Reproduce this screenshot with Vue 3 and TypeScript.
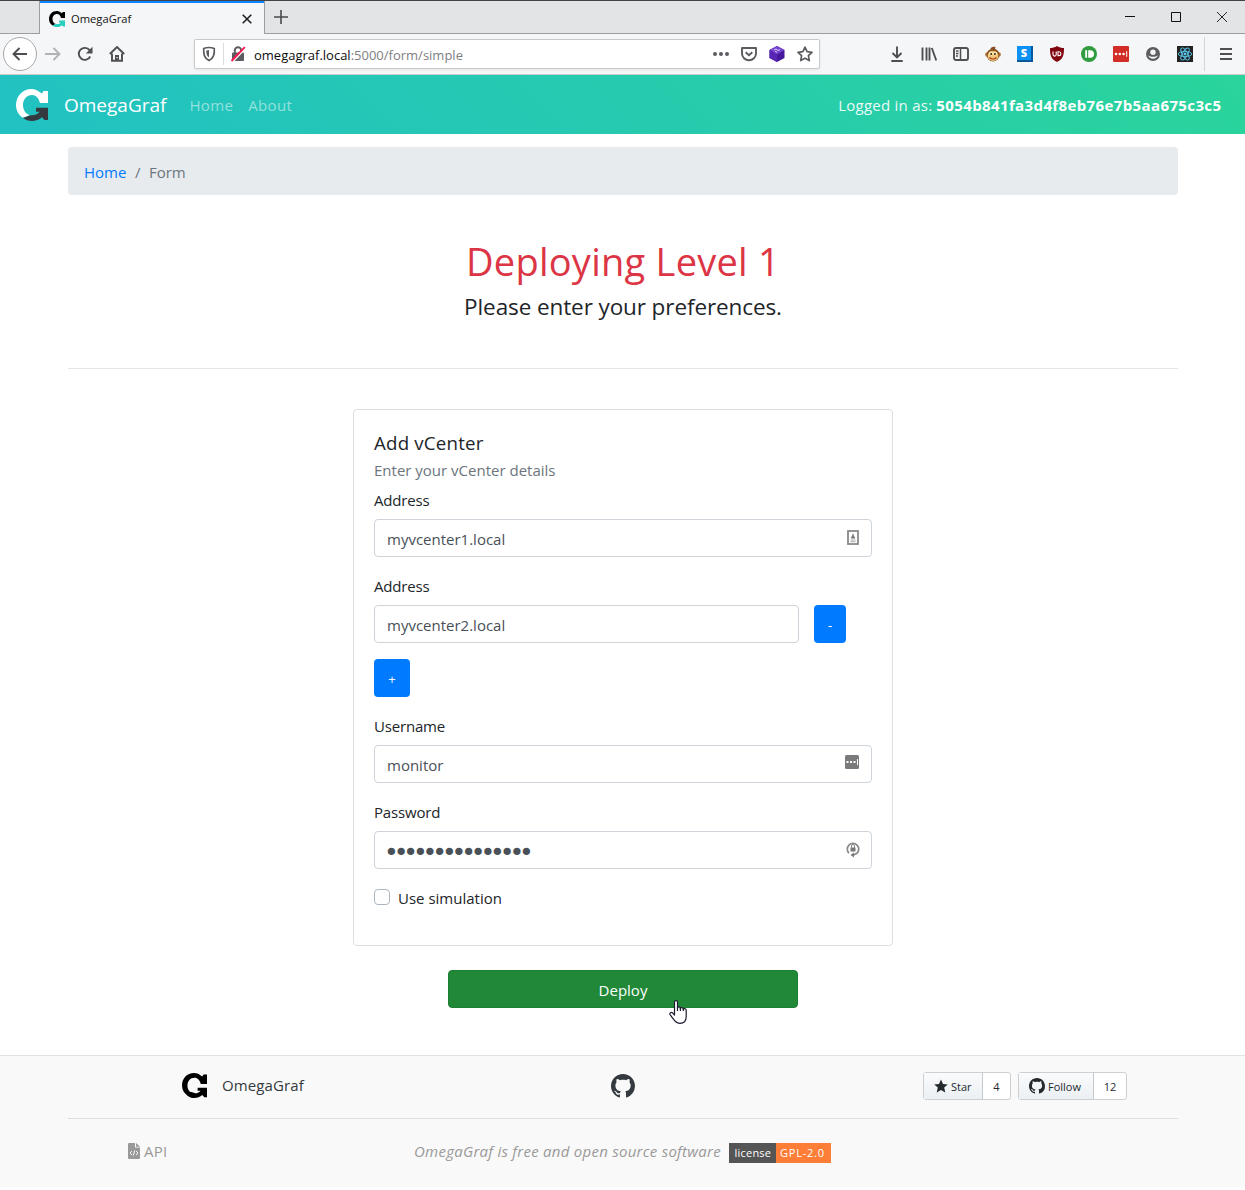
<script setup lang="ts">
import { ref } from 'vue'

const addressOne = ref('myvcenter1.local')
const addressTwo = ref('myvcenter2.local')
const username = ref('monitor')
const password = ref('123456789012345')
const simulation = ref(false)
const octocat =
  'M8 0C3.58 0 0 3.58 0 8c0 3.54 2.29 6.53 5.47 7.59.4.07.55-.17.55-.38 0-.19-.01-.82-.01-1.49-2.01.37-2.53-.49-2.69-.94-.09-.23-.48-.94-.82-1.13-.28-.15-.68-.52-.01-.53.63-.01 1.08.58 1.23.82.72 1.21 1.87.87 2.33.66.07-.52.28-.87.51-1.07-1.78-.2-3.64-.89-3.64-3.95 0-.87.31-1.59.82-2.15-.08-.2-.36-1.02.08-2.12 0 0 .67-.21 2.2.82.64-.18 1.32-.27 2-.27s1.36.09 2 .27c1.53-1.04 2.2-.82 2.2-.82.44 1.1.16 1.92.08 2.12.51.56.82 1.27.82 2.15 0 3.07-1.87 3.75-3.65 3.95.29.25.54.73.54 1.48 0 1.07-.01 1.93-.01 2.2 0 .21.15.46.55.38A8.01 8.01 0 0 0 16 8c0-4.42-3.58-8-8-8z'
const logoRing =
  'M23.500 3L26 4.500L27.500 2H32V14H24C22.800 9 20 6 16 6C10.500 6 7 10.500 7 16C7 21 9.500 25 14 26.200L7 28.800C2.600 26 0 21.500 0 16C0 7 6.500 0 15.500 0C18.500 0 21.300 1 23.500 3Z'
const logoArrow =
  'M7 28.800C10 28.500 12 26.200 16 26.200C19.500 26.200 22 25 23.500 22.800H20V18.800H32V31H28.500L26 28.300C23 31 19.500 32 16 32C12.500 32 9.500 31 7 28.800Z'
const logoFill = 'M6.500 28.500L11 24L17 26L16 32C12.500 32 9.500 31 6.500 28.500Z'
</script>

<template>
  <div class="window">
    <div class="tabstrip">
      <div class="tab">
        <svg class="fav" viewBox="0 0 32 32"><path :d="logoRing" /><path :d="logoArrow" fill="#25cfc0" /></svg>
        <span class="tabname">OmegaGraf</span>
        <svg class="tabx" viewBox="0 0 10 10"><path d="M.7.7l8.600 8.600M9.300.7L.7 9.300" stroke="#222" stroke-width="1.600" /></svg>
      </div>
      <svg class="plus" viewBox="0 0 14 14"><path d="M7 0v14M0 7h14" stroke="#4a4a4e" stroke-width="1.600" /></svg>
      <div class="winbtns">
        <svg viewBox="0 0 10 10"><path d="M0 4.500h10" stroke="#111" /></svg>
        <svg viewBox="0 0 10 10"><path d="M.5.5h9v9h-9z" fill="none" stroke="#111" /></svg>
        <svg viewBox="0 0 10 10"><path d="M0 0l10 10M10 0L0 10" stroke="#111" stroke-width=".9" /></svg>
      </div>
    </div>

    <div class="toolbar">
      <div class="back"><svg viewBox="0 0 16 16"><path d="M15 8H1.500M7.500 2L1.500 8l6 6" class="ln" /></svg></div>
      <svg class="ic fwd" viewBox="0 0 16 16"><path d="M0 8h14.500M8.500 2l6 6-6 6" class="ln" /></svg>
      <svg class="ic reload" viewBox="0 0 16 16"><path d="M13.200 10.500A6 6 0 1 1 12.600 4.200" class="ln" /><path d="M15.500.8v6.700H8.800z" fill="#4f4f53" /></svg>
      <svg class="ic home" viewBox="0 0 16 16"><path d="M.8 8L8 1l7.200 7M3 7.500V14.800h10V7.500" class="ln" /><path d="M6 9h4v6H6z" fill="#4f4f53" /><path d="M7.500 11h1.200v1.200H7.500z" fill="#fff" /></svg>
      <div class="urlbar">
        <svg class="shield" viewBox="0 0 14 16"><path d="M7 1.500c2 0 4 .5 5.300 1C12.500 8 12 12 7 14.500C2 12 1.500 8 1.700 2.500C3 2 5 1.500 7 1.500z" fill="none" stroke="#5c5c60" stroke-width="1.700" /><path d="M7 4v7.500C4.700 10 4.200 8 4.300 4.600z" fill="#5c5c60" /></svg>
        <i class="sep"></i>
        <svg class="lock" viewBox="0 0 16 16"><path d="M4.800 7V4.500a3.200 3.200 0 0 1 6.400 0V7" fill="none" stroke="#5c5c60" stroke-width="1.900" /><rect x="2" y="6.500" width="12" height="8.500" rx="1" fill="#5c5c60" /><path d="M2.500 16L15.500 2.500" stroke="#fff" stroke-width="1.500" /><path d="M1.500 15L14.800 1.200" stroke="#f8184f" stroke-width="1.900" /></svg>
        <span class="url"><b>omegagraf.local</b>:5000/form/simple</span>
        <svg class="u16" viewBox="0 0 16 16" fill="#5c5c60"><circle cx="2" cy="8" r="2" /><circle cx="8" cy="8" r="2" /><circle cx="14" cy="8" r="2" /></svg>
        <svg class="u16" viewBox="0 0 16 16"><path d="M1 2h14v5.500a7 6.700 0 0 1-14 0z" class="ln soft" stroke-linejoin="round" /><path d="M4.700 6.200L8 9.200l3.300-3" class="ln soft" /></svg>
        <svg class="u16" viewBox="0 0 16 16"><path d="M8 0l7.500 4v8L8 16 .5 12V4z" fill="#46189b" /><path d="M8 0l7.500 4L8 8.500.5 4z" fill="#7444cf" /><path d="M8 8.500v7.500L.5 12V4z" fill="#5726b5" /><path d="M5 4l2-1 2 1.500 2-1M6 5.500l2 .5" fill="none" stroke="#d9c8f7" /></svg>
        <svg class="u16" viewBox="0 0 16 16"><path d="M8 1.200l2.100 4.500 4.900.6-3.600 3.400.9 4.900L8 12.200l-4.300 2.400.9-4.900L1 6.300l4.900-.6z" fill="none" stroke="#5c5c60" stroke-width="1.700" stroke-linejoin="round" /></svg>
      </div>
      <div class="tools">
        <svg viewBox="0 0 16 16"><path d="M8 .5v11M3.500 7L8 11.500 12.500 7M2.300 15h11.400" class="ln" /></svg>
        <svg viewBox="0 0 16 16"><path d="M1.500 1.500v13M5.500 1.500v13M8.500 1.500v13M10.800 2l4.500 12.500" class="ln" /></svg>
        <svg viewBox="0 0 16 16"><rect x="1" y="2" width="14" height="12" rx="2" class="ln" /><path d="M7.500 2v12M3 5h2.500M3 7.500h2.500M3 10h2" class="ln thin" /></svg>
        <svg viewBox="0 0 16 16"><path d="M5.500 3C6 1 8 .5 10.500 1L10 3z" fill="#8a4a20" /><circle cx="2.300" cy="8.500" r="2.200" fill="#b9793b" /><circle cx="13.700" cy="8.500" r="2.200" fill="#b9793b" /><circle cx="8" cy="9" r="6.500" fill="#8a5427" /><ellipse cx="8" cy="10" rx="5.400" ry="5" fill="#f1c779" /><circle cx="5.900" cy="7.600" r="2" fill="#fbe6ac" /><circle cx="10.100" cy="7.600" r="2" fill="#fbe6ac" /><circle cx="6.200" cy="8" r=".9" fill="#2c1808" /><circle cx="9.900" cy="8" r=".9" fill="#2c1808" /><path d="M4.500 11.500c2 2 5 2 7 0" fill="none" stroke="#a33217" stroke-width="1.200" /></svg>
        <div class="sbox">S</div>
        <svg viewBox="0 0 16 16"><path d="M8 0c2 1.500 5 2 7 2 0 6.500-.5 11-7 14C1.500 13 1 8.500 1 2c2 0 5-.5 7-2z" fill="#800610" /><path d="M4 5.500v3a1.600 1.600 0 0 0 3.200 0v-3M9 5.700h1a1.900 1.900 0 0 1 0 3.900H9z" fill="none" stroke="#fff" stroke-width="1.100" /></svg>
        <svg viewBox="0 0 16 16"><circle cx="8" cy="8" r="8" fill="#2f9c3f" /><path d="M4.200 4.200h1.900v7.600H4.200zM7.200 4.200h2a3.800 3.800 0 0 1 0 7.600h-2z" fill="#fff" /></svg>
        <svg viewBox="0 0 16 16"><rect width="16" height="16" rx="1" fill="#d32d27" /><circle cx="3" cy="8" r="1.300" fill="#fff" /><circle cx="6.800" cy="8" r="1.300" fill="#fff" /><circle cx="10.600" cy="8" r="1.300" fill="#fff" /><path d="M13.700 5.200v5.600" stroke="#fff" /></svg>
        <svg viewBox="0 0 16 16"><circle cx="8" cy="8" r="7" fill="#5c5c60" /><circle cx="8" cy="6.200" r="2.700" fill="#f5f6f7" /><path d="M3.300 9.300c2.200 2 7.200 2 9.400 0-.5 4.500-8.900 4.500-9.400 0z" fill="#f5f6f7" /></svg>
        <svg viewBox="0 0 16 16"><path d="M0 0h16v16H0z" fill="#222" /><g fill="none" stroke="#5bc8ee" stroke-width=".9"><ellipse cx="8" cy="8" rx="6.800" ry="2.600" /><ellipse cx="8" cy="8" rx="6.800" ry="2.600" transform="rotate(60 8 8)" /><ellipse cx="8" cy="8" rx="6.800" ry="2.600" transform="rotate(120 8 8)" /></g><circle cx="8" cy="8" r="1.400" fill="#5bc8ee" /></svg>
      </div>
      <i class="toolsep"></i>
      <svg class="menu" viewBox="0 0 12 12"><path d="M0 1h12M0 6h12M0 11h12" stroke="#4f4f53" stroke-width="2" /></svg>
    </div>

    <nav class="navbar">
      <svg class="navlogo" viewBox="0 0 32 32"><path :d="logoRing" fill="#fff" /><path :d="logoArrow" fill="#343a40" /></svg>
      <a class="brand">OmegaGraf</a>
      <a class="link home-link">Home</a>
      <a class="link">About</a>
      <span class="login"><span class="as">Logged in as:</span><strong>5054b841fa3d4f8eb76e7b5aa675c3c5</strong></span>
    </nav>

    <main class="container">
      <div class="crumbs"><a>Home</a><span class="slash">/</span><span>Form</span></div>
      <h1>Deploying Level 1</h1>
      <p class="lead">Please enter your preferences.</p>
      <hr />

      <form class="card" @submit.prevent>
        <h5>Add vCenter</h5>
        <h6>Enter your vCenter details</h6>
        <label>Address</label>
        <div class="field">
          <input v-model="addressOne" type="text" />
          <svg class="hint" viewBox="0 0 12 16"><rect x="1" y="1" width="10" height="13" fill="#fff" stroke="#8b8b8b" stroke-width="1.800" /><path d="M6 3l1 3 1 1.500v1H4v-1L5 6z" fill="#777" /><path d="M3.500 10h5M3.500 11.700h5" stroke="#aaa" /></svg>
        </div>
        <label>Address</label>
        <div class="pair">
          <input v-model="addressTwo" type="text" />
          <button type="button" class="btn minus">-</button>
        </div>
        <button type="button" class="btn add">+</button>
        <label>Username</label>
        <div class="field">
          <input v-model="username" type="text" />
          <svg class="hint pass" viewBox="0 0 14 14"><rect width="14" height="14" rx="1.500" fill="#7a7a7a" /><path d="M1.500 6h2v2h-2zM5 6h2v2H5zM8.500 6h2v2h-2zM12 4h1v6h-1z" fill="#fff" /></svg>
        </div>
        <label>Password</label>
        <div class="field">
          <input v-model="password" type="password" class="pw" />
          <svg class="hint gen" viewBox="0 0 14 17"><path d="M3 12.200A5.700 5.700 0 1 1 11 12.200L7.500 14" fill="none" stroke="#888" stroke-width="1.700" /><path d="M8 11.500v5L4.500 14z" fill="#777" /><path d="M4.500 6.500h5v4h-5z" fill="#777" /><path d="M5.500 7V5a1.500 1.500 0 0 1 3 0v2" fill="none" stroke="#888" /></svg>
        </div>
        <div class="check"><i class="box" @click="simulation = !simulation"></i><span>Use simulation</span></div>
      </form>

      <button type="button" class="deploy">
        <span>Deploy</span>
        <svg class="hand" viewBox="0 0 18 24"><path d="M5.500 15V2.200C5.500.2 8.500.2 8.500 2.200V8C8.500 6.500 11.400 6.500 11.400 8.500C11.400 7.200 14.300 7.300 14.300 9.200C14.300 8.200 17.200 8.300 17.200 10.200V16.500C17.200 21 14.500 23.300 11 23.300C7 23.300 5.500 20.500 1.200 14.800C.2 13 2.200 11.800 3.500 12.800Z" fill="#fff" stroke="#1b1b2f" stroke-width="1.200" stroke-linejoin="round" /><path d="M8.500 7v4M11.400 8v3M14.300 9v2" stroke="#1b1b2f" stroke-width="1.200" /></svg>
      </button>
    </main>

    <footer>
      <div class="foot-top">
        <div class="fbrand">
          <svg viewBox="0 0 32 32"><path :d="logoRing" /><path :d="logoArrow" /><path :d="logoFill" /></svg>
          <span>OmegaGraf</span>
        </div>
        <svg class="fgit" viewBox="0 0 16 16"><path :d="octocat" fill="#343a40" /></svg>
        <div class="gh">
          <div class="ghbtn star"><span class="act"><svg viewBox="0 0 14 14"><path d="M7 .5l2 4.400 4.800.5-3.600 3.200 1.100 4.900L7 11l-4.300 2.500 1.100-4.900L.2 5.400 5 4.900z" fill="#24292e" /></svg><em>Star</em></span><span class="num">4</span></div>
          <div class="ghbtn follow"><span class="act"><svg viewBox="0 0 16 16"><path :d="octocat" fill="#24292e" /></svg><em>Follow</em></span><span class="num">12</span></div>
        </div>
      </div>
      <div class="foot-bottom">
        <div class="api"><svg viewBox="0 0 12 16"><path d="M0 1a1 1 0 0 1 1-1h6v4.500h5V15a1 1 0 0 1-1 1H1a1 1 0 0 1-1-1zM8 0l4 3.700H8z" fill="#999" /><path d="M4 8l-2 2 2 2M8 8l2 2-2 2M6.700 7.500l-1.400 5" fill="none" stroke="#fff" stroke-width=".9" /></svg><span>API</span></div>
        <div class="oss"><i>OmegaGraf is free and open source software</i><span class="badge"><span class="lic">license</span><span class="gpl">GPL-2.0</span></span></div>
      </div>
    </footer>
  </div>
</template>

<style>
body { margin: 0; background: #fff; }
</style>

<style scoped>
* { box-sizing: border-box; }
.window { width: 1245px; height: 1190px; overflow: hidden; position: relative; font-family: "Open Sans", "Noto Sans", sans-serif; font-size: 15px; line-height: 24px; color: #212529; white-space: nowrap; }
svg { display: block; flex: none; }
.ln { fill: none; stroke: #4f4f53; stroke-width: 1.900; }
.ln.thin { stroke-width: 1.500; }
.ln.soft { stroke: #5c5c60; }

.tabstrip { height: 34px; display: flex; background: #e3e4e6; border-top: 1px solid #434247; border-bottom: 1px solid #9d9da0; padding-left: 39px; align-items: flex-start; }
.tab { width: 226px; height: 33px; background: #f5f6f7; border: 1px solid #9d9da0; border-width: 0 1px; box-shadow: inset 0 2px #0a84ff; display: flex; align-items: center; padding: 2px 12px 0 9px; }
.fav { width: 16px; height: 16px; }
.tabname { font-size: 11.200px; margin-left: 6px; color: #111; flex: 1; }
.tabx { width: 10px; height: 10px; }
.plus { width: 14px; height: 14px; margin: 9px 0 0 9px; }
.winbtns { margin: 11px 18px 0 auto; display: flex; gap: 36px; }
.winbtns svg { width: 10px; height: 10px; }

.toolbar { height: 41px; background: #f5f6f7; border-bottom: 1px solid #ccc; display: flex; align-items: center; }
.back { width: 34px; height: 34px; margin-left: 3px; border: 1px solid #a9a9ab; border-radius: 50%; background: #fff; display: flex; align-items: center; justify-content: center; }
.back svg, .ic { width: 16px; height: 16px; }
.fwd { margin-left: 8px; opacity: .4; }
.reload, .home { margin-left: 16px; }
.urlbar { width: 626px; height: 30px; margin-left: 69px; border: 1px solid #c8c9cb; border-radius: 2px; background: #fff; display: flex; align-items: center; box-shadow: 0 1px 3px #0001; }
.shield { width: 14px; height: 16px; margin-left: 7px; }
.sep { width: 1px; height: 22px; background: #ddd; margin-left: 7px; }
.lock { width: 16px; height: 16px; margin-left: 6px; }
.url { font-size: 13px; color: #808083; margin-left: 8px; flex: 1; padding-top: 1px; }
.url b { color: #0c0c0d; font-weight: 400; }
.u16 { width: 16px; height: 16px; margin-left: 12px; }
.u16:last-child { margin-right: 6px; }
.tools { display: flex; gap: 16px; margin-left: 69px; }
.tools svg { width: 16px; height: 16px; }
.sbox { width: 16px; height: 16px; background: #0c91f5; border: solid #07599e; border-width: 0 2px 2px 0; color: #fff; font-size: 11px; line-height: 14px; font-weight: 800; text-align: center; }
.toolsep { width: 1px; height: 34px; background: #d5d5d7; margin-left: 11px; }
.menu { width: 12px; height: 12px; margin-left: 15px; }

.navbar { height: 59px; background: linear-gradient(45deg, #22c1c3, #2ad49b); display: flex; align-items: center; padding: 0 24px 0 16px; color: #fff; }
.navlogo { width: 32px; height: 32px; margin-top: 1px; }
.brand { font-size: 19px; margin-left: 16px; }
.link { color: rgba(255, 255, 255, .5); margin-left: 16px; letter-spacing: .35px; }
.home-link { margin-left: 23px; margin-right: -1px; }
.login { margin-left: auto; display: flex; gap: 4px; }
.as { opacity: .9; letter-spacing: .25px; }
.login strong { letter-spacing: .38px; margin-right: -.4px; }

.container { width: 1110px; margin: 13px auto 0 68px; display: flex; flex-direction: column; align-items: center; }
.crumbs { width: 100%; height: 48px; background: #e7ebee; border-radius: 4px; padding: 13px 16px; color: #6c757d; }
.crumbs a { color: #007bff; }
.slash { margin: 0 8.500px; }
h1 { margin: 42px 0 0; font-size: 38px; line-height: 48px; font-weight: 400; color: #dc3545; letter-spacing: .25px; }
.lead { margin: 6px 0 0; font-size: 22.500px; line-height: 32px; letter-spacing: -.1px; }
hr { width: 100%; margin: 45px 0 40px; border: 0; border-top: 1px solid #e5e5e5; }
.card { width: 540px; height: 537px; border: 1px solid #dfdfdf; border-radius: 4px; padding: 21px 20px 0; display: flex; flex-direction: column; align-items: flex-start; }
h5 { margin: 0; font-size: 18.700px; line-height: 24px; font-weight: 400; letter-spacing: .2px; }
h6 { margin: 3px 0 6px; font-size: 15px; line-height: 24px; font-weight: 400; color: #6c757d; }
label { height: 24px; margin-bottom: 7px; letter-spacing: -.18px; }
.field, .pair { width: 498px; height: 38px; margin-bottom: 17px; display: flex; align-items: center; position: relative; }
input { flex: 1; min-width: 0; height: 38px; border: 1px solid #ced4da; border-radius: 4px; padding: 1px 12px 0; font: inherit; color: #495057; background: #fff; outline: none; letter-spacing: inherit; }
.pw { font-family: "DejaVu Sans", sans-serif; font-size: 25px; letter-spacing: -5.100px; padding: 4px 9px 0; }
.hint { position: absolute; right: 13px; top: 11px; width: 12px; height: 16px; }
.hint.pass { top: 10px; width: 14px; height: 14px; }
.hint.gen { right: 12px; top: 10px; width: 14px; height: 17px; }
.pair { width: 472px; gap: 15px; margin-bottom: 16px; }
.btn { height: 38px; border: 0; border-radius: 4px; background: #007bff; color: #fff; font: inherit; font-size: 13px; padding: 2px 0 0; }
.minus { width: 32px; }
.add { width: 36px; margin-bottom: 17px; }
.check { display: flex; align-items: center; height: 24px; }
.box { width: 16px; height: 16px; border: 1px solid #adb5bd; border-radius: 4px; margin: 0 8px 3px 0; }
.deploy { width: 350px; height: 38px; margin-top: 24px; border: 1px solid #1e7e34; border-radius: 4px; background: #218838; color: #fff; font: inherit; position: relative; padding: 1px 0 0; }
.hand { position: absolute; left: 220px; top: 29px; width: 18px; height: 24px; }

footer { margin-top: 47px; height: 132px; background: #f9f9f9; border-top: 1px solid #e2e2e2; padding: 0 67px 0 68px; }
.foot-top { height: 63px; border-bottom: 1px solid #dedede; display: flex; align-items: center; padding: 0 51px 2px 114px; }
.fbrand { display: flex; align-items: center; width: 429px; color: #343a40; margin-bottom: 2px; letter-spacing: .1px; }
.fbrand svg { width: 25px; height: 25px; margin-right: 15px; }
.fgit { width: 24px; height: 24px; }
.gh { margin-left: auto; display: flex; gap: 7px; font-size: 11px; line-height: 26px; color: #24292e; }
.ghbtn { height: 28px; display: flex; border: 1px solid #cdcfd1; border-radius: 3px; background: #fff; }
.act { display: flex; align-items: center; padding-left: 10px; border-right: 1px solid #c5c9cc; background: linear-gradient(#fafbfc, #ebf0f4); }
.act em { font-style: normal; font-weight: 500; margin-left: 3px; padding-top: 1px; }
.num { flex: 1; text-align: center; padding-top: 1px; }
.star { width: 88px; }
.star .act { width: 59px; }
.star svg { width: 14px; height: 14px; }
.follow { width: 109px; }
.follow .act { width: 75px; }
.follow svg { width: 16px; height: 16px; }
.foot-bottom { display: flex; align-items: center; padding: 20px 0 0 60px; color: #999; }
.api { display: flex; align-items: center; width: 286px; gap: 4px; letter-spacing: .3px; }
.api svg { width: 12px; height: 16px; }
.oss { display: flex; align-items: center; }
.oss > i { letter-spacing: .26px; }
.badge { display: flex; margin: 3px 0 0 8px; height: 20px; font-size: 11px; line-height: 20px; color: #fff; text-align: center; }
.lic { width: 47px; background: #555; letter-spacing: .2px; padding-left: 1px; }
.gpl { width: 55px; background: #fe7d37; letter-spacing: .75px; padding-right: 2px; }
</style>
